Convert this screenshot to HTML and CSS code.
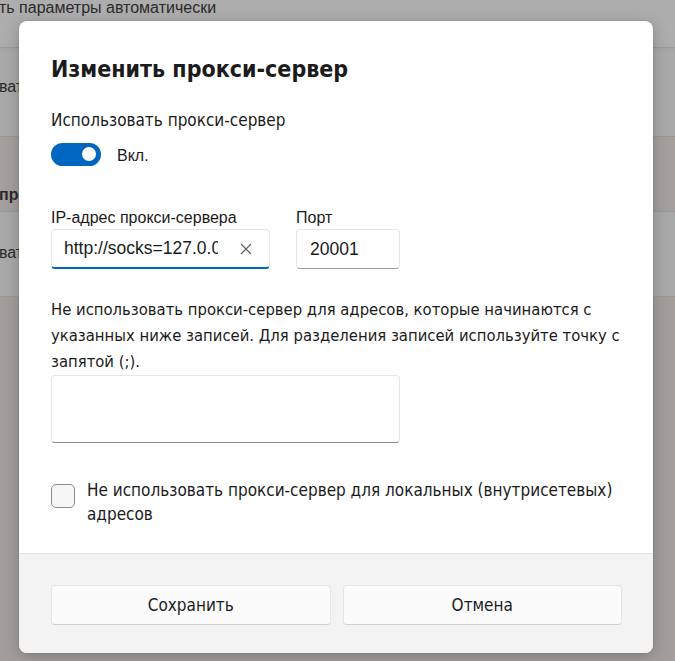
FILE: index.html
```html
<!DOCTYPE html>
<html lang="ru">
<head>
<meta charset="utf-8">
<link rel="stylesheet" href="styles.css">
</head>
<body>
<div class="page">
  <div class="row r1"><span class="bg-text">ть параметры автоматически</span></div>
  <div class="row r2"><span class="bg-text">ват</span></div>
  <div class="row r3"><span class="bg-text bg-bold">про</span></div>
  <div class="row r4"><span class="bg-text">ват</span></div>
  <div class="row r5"></div>
</div>

<div class="dialog">
  <div class="content">
    <h1 class="title">Изменить прокси-сервер</h1>
    <p class="cond-text use-label">Использовать прокси-сервер</p>
    <div class="toggle-row">
      <span class="toggle"><span class="knob"></span></span>
      <span class="ui-text">Вкл.</span>
    </div>
    <div class="fields">
      <div class="field field-ip">
        <span class="ui-text field-label">IP-адрес прокси-сервера</span>
        <div class="input input-ip">
          <span class="input-value">http://socks=127.0.0.1:20001</span>
          <svg class="clear" width="12" height="12" viewBox="0 0 12 12"><path d="M1 1L11 11M11 1L1 11" stroke="#5f5f5f" stroke-width="1.1" fill="none"/></svg>
        </div>
      </div>
      <div class="field field-port">
        <span class="ui-text field-label">Порт</span>
        <div class="input input-port"><span class="input-value">20001</span></div>
      </div>
    </div>
    <p class="cond-text desc">Не использовать прокси-сервер для адресов, которые начинаются с указанных ниже записей. Для разделения записей используйте точку с запятой (;).</p>
    <div class="textarea"></div>
    <div class="check-row">
      <span class="checkbox"></span>
      <span class="cond-text check-label">Не использовать прокси-сервер для локальных (внутрисетевых) адресов</span>
    </div>
  </div>
  <div class="footer">
    <button class="btn cond-text">Сохранить</button>
    <button class="btn cond-text">Отмена</button>
  </div>
</div>
</body>
</html>
```

FILE: styles.css
```css
html, body {
  margin: 0;
  padding: 0;
}
body {
  width: 675px;
  height: 661px;
  overflow: hidden;
  position: relative;
  font-family: "Liberation Sans", Arial, sans-serif;
  color: #1b1b1b;
}

.page {
  display: flex;
  flex-direction: column;
  height: 661px;
  background: #a29e9c;
}
.row {
  display: flex;
  align-items: flex-start;
  border-bottom: 1px solid #999797;
}
.bg-text {
  font-family: "Liberation Sans", sans-serif;
  font-size: 16px;
  line-height: 18px;
  color: #2a2a2a;
  margin-left: -1px;
}
.bg-bold { font-weight: bold; }
.r1 { height: 47px; background: #aeadae; }
.r1 .bg-text { margin-top: -1px; }
.r2 { height: 84px; background: #aaa9aa; border-top: 4px solid #a7a6a7; }
.r2 .bg-text { margin-top: 26px; }
.r3 { height: 74px; background: #a4a09e; }
.r3 .bg-text { margin-top: 49px; }
.r4 { height: 84px; background: #a9a8a9; }
.r4 .bg-text { margin-top: 32px; }
.r5 { flex: 1; background: #a29e9c; border-bottom: 0; }

.dialog {
  position: absolute;
  left: 19px;
  top: 21px;
  width: 634px;
  height: 632px;
  background: #ffffff;
  border-radius: 8px;
  box-shadow: 0 4px 16px rgba(0,0,0,0.22), 0 0 0 1px rgba(0,0,0,0.06);
  display: flex;
  flex-direction: column;
  overflow: hidden;
}
.content {
  flex: 1;
  padding: 32px 32px 0 32px;
  display: flex;
  flex-direction: column;
}
.cond-text {
  font-family: "DejaVu Sans Condensed", "Liberation Sans Narrow", "Liberation Sans", sans-serif;
}
.ui-text {
  font-family: "Liberation Sans", sans-serif;
  font-size: 16px;
  color: #1b1b1b;
}
.title {
  margin: 0;
  font-family: "DejaVu Sans Condensed", "Liberation Sans Narrow", "Liberation Sans", sans-serif;
  font-size: 23px;
  font-weight: bold;
  line-height: 32px;
  color: #1b1b1b;
}
.use-label {
  margin: 25px 0 0 0;
  font-size: 17px;
  line-height: 20px;
}
.toggle-row {
  margin-top: 12px;
  display: flex;
  align-items: center;
  gap: 16px;
  height: 24px;
}
.toggle-row .ui-text {
  margin-top: 3px;
}
.toggle {
  width: 50px;
  height: 23px;
  border-radius: 12px;
  background: #0067c0;
  position: relative;
  box-sizing: border-box;
}
.knob {
  position: absolute;
  right: 5px;
  top: 4.5px;
  width: 14px;
  height: 14px;
  border-radius: 50%;
  background: #ffffff;
}
.fields {
  margin-top: 42px;
  display: flex;
  gap: 26px;
}
.field {
  display: flex;
  flex-direction: column;
  gap: 1px;
}
.field-label {
  line-height: 20px;
}
.input {
  box-sizing: border-box;
  height: 40px;
  border: 1px solid #e5e5e5;
  border-bottom: 1px solid #8a8a8a;
  border-radius: 4px;
  background: #ffffff;
  display: flex;
  align-items: center;
  overflow: hidden;
}
.input-ip {
  width: 219px;
  border-bottom: 2px solid #0067c0;
  padding: 0 0 0 12px;
}
.input-ip .input-value {
  flex: none;
  width: 154px;
  overflow: hidden;
  white-space: nowrap;
}
.input-ip .clear {
  margin-left: 22px;
}
.input-port {
  width: 104px;
  padding: 0 13px;
  border-bottom-color: #a0a0a0;
}
.input-value {
  font-family: "Liberation Sans", sans-serif;
  font-size: 17.5px;
  color: #1b1b1b;
}
.clear { flex: none; }
.desc {
  margin: 28px 0 0 0;
  font-size: 16.5px;
  line-height: 26px;
  color: #1b1b1b;
}
.textarea {
  margin-top: 0;
  box-sizing: border-box;
  width: 349px;
  height: 68px;
  border: 1px solid #e5e5e5;
  border-bottom-color: #8a8a8a;
  border-radius: 4px;
}
.check-row {
  margin-top: 35px;
  display: flex;
  align-items: flex-start;
  gap: 12px;
}
.checkbox {
  flex: none;
  box-sizing: border-box;
  width: 24px;
  height: 24px;
  margin-top: 6px;
  border: 1px solid #8a8a8a;
  border-radius: 5px;
  background: #f6f6f6;
}
.check-label {
  font-size: 17px;
  line-height: 24px;
  color: #1b1b1b;
}
.footer {
  height: 100px;
  box-sizing: border-box;
  background: #f3f3f3;
  border-top: 1px solid #e5e5e5;
  padding: 31px 31px 0 32px;
  display: flex;
  gap: 12px;
  align-items: flex-start;
}
.btn {
  flex: 1;
  height: 40px;
  border: 1px solid #e5e5e5;
  border-bottom-color: #d0d0d0;
  border-radius: 4px;
  background: #fbfbfb;
  font-size: 17px;
  color: #1b1b1b;
  padding: 0;
}
```
